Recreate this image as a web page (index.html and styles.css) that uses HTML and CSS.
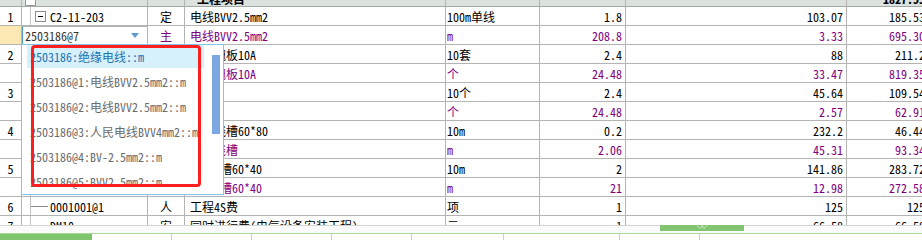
FILE: index.html
```html
<!DOCTYPE html>
<html lang="zh-CN">
<head>
<meta charset="utf-8">
<title>预算书</title>
<link rel="stylesheet" href="styles.css">
</head>
<body>
<div class="page">
  <div class="sheet">
    <div class="row head">
      <div></div>
      <div class="c1"><span class="hbox"></span></div>
      <div></div>
      <div class="c3 ht">工程项目</div>
      <div></div>
      <div></div>
      <div></div>
      <div class="n ht">1827.55</div>
    </div>
    <div class="row">
      <div class="num">1</div>
      <div class="c1 tree"><span class="fold"><i></i></span>C2-11-203</div>
      <div class="typ">定</div>
      <div class="c3">电线BVV2.5mm2</div>
      <div class="c4">100m单线</div>
      <div class="n">1.8</div>
      <div class="n">103.07</div>
      <div class="n">185.53</div>
    </div>
    <div class="row m">
      <div class="num cur"></div>
      <div class="c1 combo"><span class="val">2503186@7</span><span class="caret"></span></div>
      <div class="typ">主</div>
      <div class="c3">电线BVV2.5mm2</div>
      <div class="c4">m</div>
      <div class="n">208.8</div>
      <div class="n">3.33</div>
      <div class="n">695.30</div>
    </div>
    <div class="row">
      <div class="num">2</div>
      <div class="c1 tree">C2-11-380</div>
      <div class="typ">定</div>
      <div class="c3">单联翘板10A</div>
      <div class="c4">10套</div>
      <div class="n">2.4</div>
      <div class="n">88</div>
      <div class="n">211.2</div>
    </div>
    <div class="row m">
      <div class="num"></div>
      <div class="c1 tree"></div>
      <div class="typ">主</div>
      <div class="c3">单联翘板10A</div>
      <div class="c4">个</div>
      <div class="n">24.48</div>
      <div class="n">33.47</div>
      <div class="n">819.35</div>
    </div>
    <div class="row">
      <div class="num">3</div>
      <div class="c1 tree">C2-11-405</div>
      <div class="typ">定</div>
      <div class="c3">插座</div>
      <div class="c4">10个</div>
      <div class="n">2.4</div>
      <div class="n">45.64</div>
      <div class="n">109.54</div>
    </div>
    <div class="row m">
      <div class="num"></div>
      <div class="c1 tree"></div>
      <div class="typ">主</div>
      <div class="c3">插座</div>
      <div class="c4">个</div>
      <div class="n">24.48</div>
      <div class="n">2.57</div>
      <div class="n">62.91</div>
    </div>
    <div class="row">
      <div class="num">4</div>
      <div class="c1 tree">C2-12-171</div>
      <div class="typ">定</div>
      <div class="c3">塑料线槽60*80</div>
      <div class="c4">10m</div>
      <div class="n">0.2</div>
      <div class="n">232.2</div>
      <div class="n">46.44</div>
    </div>
    <div class="row m">
      <div class="num"></div>
      <div class="c1 tree"></div>
      <div class="typ">主</div>
      <div class="c3">塑料线槽</div>
      <div class="c4">m</div>
      <div class="n">2.06</div>
      <div class="n">45.31</div>
      <div class="n">93.34</div>
    </div>
    <div class="row">
      <div class="num">5</div>
      <div class="c1 tree">C2-12-170</div>
      <div class="typ">定</div>
      <div class="c3">PVC线槽60*40</div>
      <div class="c4">10m</div>
      <div class="n">2</div>
      <div class="n">141.86</div>
      <div class="n">283.72</div>
    </div>
    <div class="row m">
      <div class="num"></div>
      <div class="c1 tree"></div>
      <div class="typ">主</div>
      <div class="c3">PVC线槽60*40</div>
      <div class="c4">m</div>
      <div class="n">21</div>
      <div class="n">12.98</div>
      <div class="n">272.58</div>
    </div>
    <div class="row">
      <div class="num">6</div>
      <div class="c1 tree"><span class="branch"></span>0001001@1</div>
      <div class="typ">人</div>
      <div class="c3">工程4S费</div>
      <div class="c4">项</div>
      <div class="n">1</div>
      <div class="n">125</div>
      <div class="n">125</div>
    </div>
    <div class="row">
      <div class="num">7</div>
      <div class="c1 tree"><span class="branch"></span>DM10</div>
      <div class="typ">安</div>
      <div class="c3">同时进行费(电气设备安装工程)</div>
      <div class="c4">元</div>
      <div class="n">1</div>
      <div class="n">66.58</div>
      <div class="n">66.58</div>
    </div>
  </div>

  <div class="hscroll">
    <div class="thumb">
      <svg width="12" height="6" viewBox="0 0 12 6"><polyline points="1,0.5 4,3.5 7,0.5" fill="none" stroke="#d6ecd0" stroke-width="1"/><polyline points="5,0.5 8,3.5 11,0.5" fill="none" stroke="#d6ecd0" stroke-width="1"/></svg>
    </div>
  </div>
  <div class="tabs">
    <div class="tab on"></div>
    <div class="tab w80"></div>
    <div class="tab w80"></div>
    <div class="tab w80"></div>
    <div class="tab w80"></div>
    <div class="tab w92"></div>
    <div class="tab w116"></div>
    <div class="tab w80"></div>
    <div class="tab rest"></div>
  </div>

  <div class="dropdown">
    <div class="opt sel">2503186:绝缘电线::m</div>
    <div class="opt">2503186@1:电线BVV2.5mm2::m</div>
    <div class="opt">2503186@2:电线BVV2.5mm2::m</div>
    <div class="opt">2503186@3:人民电线BVV4mm2::m</div>
    <div class="opt">2503186@4:BV-2.5mm2::m</div>
    <div class="opt">2503186@5:BVV2.5mm2::m</div>
    <div class="vbar"></div>
  </div>
  <div class="mark"></div>
</div>
</body>
</html>
```

FILE: styles.css
```css
* {
  box-sizing: border-box;
  margin: 0;
  padding: 0;
}

body {
  width: 922px;
  height: 240px;
  overflow: hidden;
  background: #fff;
  font-family: "Noto Sans Mono CJK SC", "DejaVu Sans Mono", "Noto Sans CJK SC", monospace;
  font-size: 12px;
  color: #000;
}

.page {
  position: relative;
  width: 922px;
  height: 240px;
  overflow: hidden;
}

.sheet {
  width: 928px;
  height: 225px;
  overflow: hidden;
}

.row {
  display: grid;
  grid-template-columns: 22px 126px 37px 261px 94px 86px 221px 82px;
  height: 19px;
}

.row > div {
  display: flex;
  align-items: center;
  border-right: 1px solid #b4b4b4;
  border-bottom: 1px solid #b4b4b4;
  white-space: nowrap;
  overflow: hidden;
  line-height: 17px;
}

.row.m {
  color: #800080;
}

.head {
  height: 7px;
  background: #dce3df;
}

.head > div {
  align-items: flex-end;
  border-bottom-color: #a3aaa6;
  font-weight: bold;
}

.head .ht {
  line-height: 14px;
}

.head .c3 {
  padding-left: 12px;
}

.hbox {
  display: block;
  width: 11px;
  height: 11px;
  margin-left: 3px;
  border: 1px solid #9a9a9a;
  background: #fff;
  flex: none;
}

.num {
  justify-content: center;
}

.num.cur {
  background: #fce8b2;
}

.c1.tree {
  padding-left: 9px;
  background: linear-gradient(#c4c4c4, #c4c4c4) no-repeat 8px 0 / 1px 100%;
}

.fold {
  display: flex;
  align-items: center;
  justify-content: center;
  width: 11px;
  height: 11px;
  margin-left: 4px;
  margin-right: 4px;
  border: 1px solid #8c8c8c;
  background: #fff;
  flex: none;
}

.fold i {
  display: block;
  width: 5px;
  height: 1px;
  background: #000;
}

.branch {
  display: block;
  width: 17px;
  height: 1px;
  margin-right: 2px;
  background: #8a8a8a;
  flex: none;
}

.combo {
  justify-content: space-between;
  padding: 0 8px 0 2px;
  border: 1px solid #4ea2da;
  border-top-color: #b4b4b4;
  color: #333;
  background: #fff;
}

.caret {
  width: 0;
  height: 0;
  border-left: 4px solid transparent;
  border-right: 4px solid transparent;
  border-top: 5px solid #5b9bd5;
}

.typ {
  justify-content: center;
}

.c3 {
  padding-left: 5px;
}

.c4 {
  padding-left: 1px;
}

.n {
  justify-content: flex-end;
  padding-right: 3px;
}

.hscroll {
  height: 8px;
  border-top: 1px solid #d2d6d3;
  background: #fbfbfb;
  display: flex;
  align-items: flex-start;
}

.thumb {
  width: 84px;
  height: 6px;
  margin-left: 660px;
  margin-top: -1px;
  background: #83c470;
  display: flex;
  justify-content: center;
}

.thumb svg {
  display: block;
}

.tabs {
  height: 7px;
  border-top: 1px solid #a9dc9a;
  display: flex;
}

.tab {
  height: 100%;
  border-right: 1px solid #b6e2aa;
  flex: none;
}

.tab.on {
  width: 92px;
  background: #7dc46d;
  border-right: none;
}

.tab.w80 { width: 80px; }
.tab.w92 { width: 92px; }
.tab.w116 { width: 116px; }
.tab.rest { flex: 1; border-right: none; }

.dropdown {
  position: absolute;
  left: 21px;
  top: 44px;
  width: 203px;
  height: 151px;
  border: 1px solid #86c5ea;
  background: #fff;
  overflow: hidden;
}

.opt {
  width: 177px;
  height: 23px;
  margin: 0 0 2px 5px;
  padding-left: 3px;
  display: flex;
  align-items: center;
  white-space: nowrap;
  color: #6c6c6c;
}

.opt.sel {
  background: #d6f1f9;
  color: #1f72b5;
}

.vbar {
  position: absolute;
  left: 190px;
  top: 10px;
  width: 8px;
  height: 79px;
  background: #7da7e2;
}

.mark {
  position: absolute;
  left: 31px;
  top: 45px;
  width: 170px;
  height: 142px;
  border: 3px solid #fb1f1f;
  border-radius: 4px;
}
```
